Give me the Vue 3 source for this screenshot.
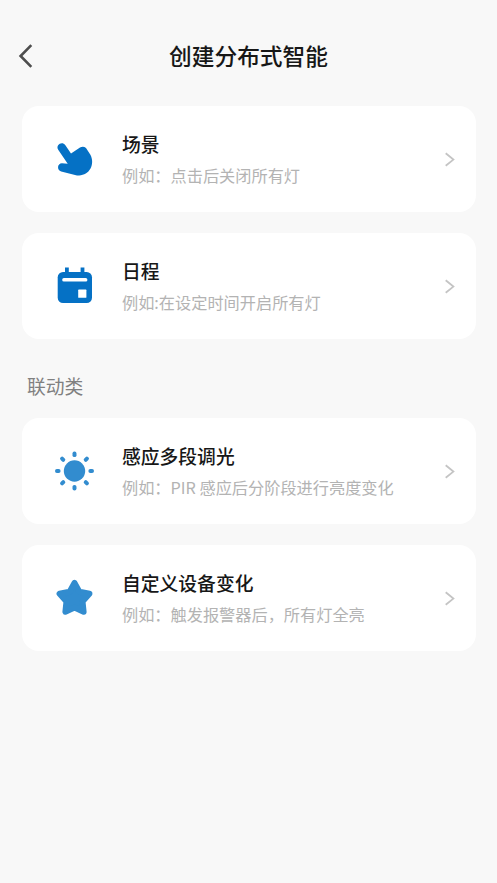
<script setup>
const groups = [
  {
    items: [
      { icon: 'tap', title: '场景', hint: '例如：点击后关闭所有灯' },
      { icon: 'calendar', title: '日程', hint: '例如:在设定时间开启所有灯' },
    ],
  },
  {
    label: '联动类',
    items: [
      { icon: 'sun', title: '感应多段调光', hint: '例如：PIR 感应后分阶段进行亮度变化' },
      { icon: 'star', title: '自定义设备变化', hint: '例如：触发报警器后，所有灯全亮' },
    ],
  },
]
const rays = [0, 45, 90, 135, 180, 225, 270, 315]
</script>

<template>
  <div class="page">
    <header class="header">
      <button class="back" aria-label="返回">
        <svg width="16" height="26" viewBox="0 0 16 26"><path d="M13.3 2.2 2.6 13l10.7 10.8" /></svg>
      </button>
      <h1 class="heading">创建分布式智能</h1>
    </header>
    <main class="content">
      <section v-for="(group, i) in groups" :key="i" class="group">
        <h2 v-if="group.label" class="label">{{ group.label }}</h2>
        <div class="list">
          <article v-for="item in group.items" :key="item.title" class="card">
            <svg class="icon" :class="item.icon" width="42" height="42" viewBox="0 0 42 42">
              <g v-if="item.icon === 'tap'">
                <path d="M4.2 11.8C1.3 7.2 7.9 2.8 11.2 7L17 15.6L26 9.6Q29.2 7.5 32 10L36.4 16.8C41.4 26.6 35.3 37.5 25 37.4Q23 37.4 21 36.9L7.2 33.4C2.8 32.2 3 25.4 8 25.2L13.7 25.8Z" />
              </g>
              <g v-else-if="item.icon === 'calendar'">
                <path d="M11 2.6h3.8v5H11zM26.6 2.6h3.8v5h-3.8z" />
                <rect x="3.7" y="7" width="34.3" height="31" rx="5.3" />
                <rect class="cut" x="8.2" y="13" width="25.2" height="3.6" rx="1.7" />
                <rect class="cut" x="24.2" y="24.6" width="8.2" height="8.2" rx=".6" />
              </g>
              <g v-else-if="item.icon === 'sun'">
                <circle cx="20.5" cy="21" r="10.7" />
                <rect v-for="angle in rays" :key="angle" x="18.5" y="1.5" width="4" height="5.6" rx="1.9" :transform="`rotate(${angle} 20.5 21)`" />
              </g>
              <path v-else class="rounded" d="M20.5 6 25.3 14.7 35.4 16.8 28.5 24.4 29.6 34.7 20.5 30.6 11.4 34.7 12.5 24.4 5.6 16.8 15.7 14.7Z" />
            </svg>
            <div class="copy">
              <h3 class="title">{{ item.title }}</h3>
              <p class="hint">{{ item.hint }}</p>
            </div>
            <svg class="chevron" width="12" height="16" viewBox="0 0 12 16"><path d="M1.7 2.2 9.4 8.6l-7.7 6.2" /></svg>
          </article>
        </div>
      </section>
    </main>
  </div>
</template>

<style>
body {
  margin: 0;
  background: #f8f8f8;
}
</style>

<style scoped>
.page {
  min-height: 100vh;
  box-sizing: border-box;
  background: #f8f8f8;
  font-family: "Noto Sans CJK SC", sans-serif;
}
h1, h2, h3, p {
  margin: 0;
}
.header {
  display: grid;
  grid-template-columns: 40px 1fr 40px;
  align-items: center;
  height: 106px;
  box-sizing: border-box;
  padding: 6px 0 0;
}
.back {
  display: flex;
  padding: 0 0 0 18px;
  border: 0;
  background: none;
}
.back path {
  fill: none;
  stroke: #4d4d4d;
  stroke-width: 2.6;
}
.heading {
  font-size: 22.7px;
  line-height: 34px;
  font-weight: 500;
  color: #171717;
  text-align: center;
}
.content {
  padding: 0 21.5px;
}
.label {
  padding: 32px 0 18px 5.5px;
  font-size: 18.8px;
  line-height: 29px;
  font-weight: 400;
  color: #808080;
}
.list {
  display: flex;
  flex-direction: column;
  gap: 21px;
}
.card {
  display: flex;
  align-items: center;
  height: 106px;
  box-sizing: border-box;
  padding: 0 20px 0 32px;
  border-radius: 17px;
  background: #fff;
}
.icon {
  flex: none;
  fill: #0571c5;
}
.sun, .star {
  fill: #328ccf;
}
.cut {
  fill: #fff;
}
.rounded {
  stroke: #328ccf;
  stroke-width: 6;
  stroke-linejoin: round;
}
.copy {
  flex: 1;
  padding-left: 26.5px;
  white-space: nowrap;
}
.title {
  font-size: 18.8px;
  line-height: 32px;
  font-weight: 500;
  color: #171717;
}
.hint {
  font-size: 16.2px;
  line-height: 30px;
  font-weight: 400;
  color: #b3b3b3;
}
.chevron {
  flex: none;
}
.chevron path {
  fill: none;
  stroke: #c4c4c4;
  stroke-width: 1.8;
}
</style>
